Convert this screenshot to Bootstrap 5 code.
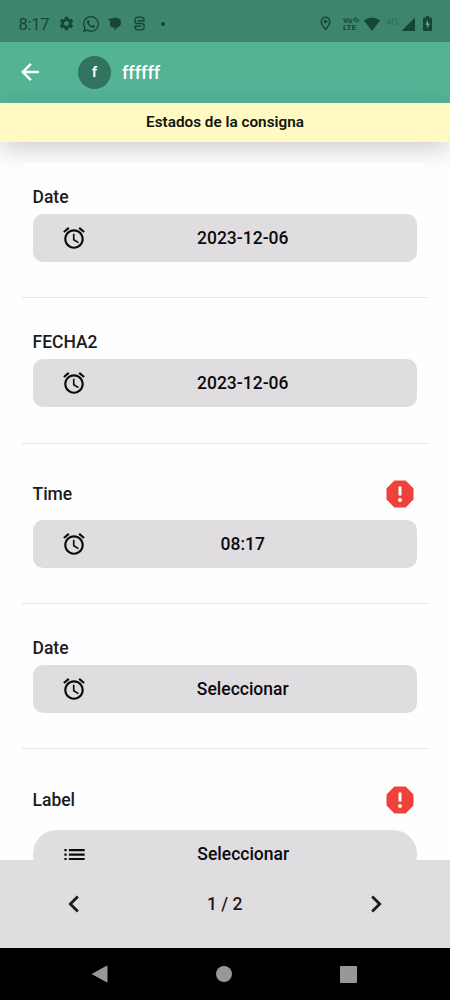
<!DOCTYPE html>
<html lang="es">
<head>
<meta charset="utf-8">
<meta name="viewport" content="width=device-width, initial-scale=1">
<title>Estados de la consigna</title>
<link href="https://cdn.jsdelivr.net/npm/bootstrap@5.3.0/dist/css/bootstrap.min.css" rel="stylesheet">
<style>
  body { font-family: Roboto, "Liberation Sans", sans-serif; color: #1d1b1e; background: #fefefe; font-weight: 500; }
  svg { display: block; flex: none; fill: currentColor; }
  .screen { height: 1000px; }
  .status { height: 42px; background: #3d856c; color: #17453a; padding: 5px 18px 0 18.5px; }
  .clock { font-size: 16.5px; font-weight: 400; width: 30px; letter-spacing: -.3px; margin: 3px 9px 0 0; }
  .volte { font-size: 8px; line-height: 7px; font-weight: 700; width: 17px; margin-right: 4px; }
  .volte span { display: block; white-space: nowrap; }
  .net { font-size: 9.5px; line-height: 10px; font-weight: 400; color: #2c715d; width: 13px; margin: 0 2px 4px 0; }
  .appbar { height: 60.5px; background: #54b295; padding-left: 17px; }
  .avatar { width: 33px; height: 33px; background: #30735f; font-size: 15.5px; margin-left: 35px; margin-right: 11px; }
  .user-name { font-size: 18px; }
  .banner { height: 39.5px; background: #fefac2; color: #15130c; font-size: 15.3px; font-weight: 600; padding-top: 1px; box-shadow: 0 9px 24px -2px rgba(50,40,60,.24); z-index: 0; }
  .fields { padding: 21px 22.5px 0 21.5px; }
  .sheet { background: #fefefe; z-index: 1; border-radius: 8px 8px 0 0; }
  .field { padding: 18px 11px 35px; height: 145.5px; border-bottom: 1px solid #e6e4e6; }
  .field.first { height: 135px; padding-top: 8px; }
  .field.required { height: 160px; padding-top: 25px; }
  .field.required .field-label { height: 51px; margin-top: 0; }
  .field.last .pick { margin-top: 5px; }
  .field-label { height: 34px; padding-top: 1px; font-size: 17.5px; margin-top: 9px; }
  .alert-icon { margin: -1px -1px 0 0; color: #ee4139; }
  .pick { height: 48px; border-radius: 10px; background: #e0dde1; color: #0c0a0d; font-size: 17.5px; font-weight: 500; padding: 0 29px 0 28.5px; border: 0; }
  .pick span { flex: 1; text-align: center; margin: 1px -11px 0 0; }
  .pick.rounder { border-radius: 24px; }
  .pager { height: 88px; background: #e0dde1; font-size: 17.5px; padding: 0 57px 0 56.5px; z-index: 2; }
  .sysnav { height: 52px; background: #000; color: #9a979b; z-index: 2; padding: 0 93px 0 91px; }
</style>
</head>
<body>
<svg class="d-none">
  <symbol id="alarm" viewBox="0 0 24 24"><path d="M22 5.720l-4.600-3.860-1.290 1.530 4.600 3.860L22 5.720zM7.880 3.390L6.600 1.860 2 5.710l1.290 1.530 4.590-3.850zM12.500 8H11v6l4.750 2.850.75-1.230-4-2.370V8zM12 4c-4.970 0-9 4.030-9 9s4.020 9 9 9c4.970 0 9-4.030 9-9s-4.030-9-9-9zm0 16c-3.870 0-7-3.130-7-7s3.130-7 7-7 7 3.130 7 7-3.130 7-7 7z"/></symbol>
  <symbol id="report" viewBox="0 0 24 24"><path d="M15.730 3H8.270L3 8.270v7.460L8.270 21h7.460L21 15.730V8.270L15.730 3zM12 17.300c-.72 0-1.300-.58-1.300-1.300 0-.72.58-1.300 1.300-1.300.72 0 1.300.58 1.300 1.300 0 .72-.58 1.300-1.300 1.300zm1-4.300h-2V7h2v6z"/></symbol>
</svg>
<div class="screen d-flex flex-column overflow-hidden">
  <header class="status d-flex align-items-center flex-shrink-0">
    <span class="clock">8:17</span>
    <svg width="17" height="17" viewBox="0 0 24 24"><path d="M19.14 12.94c.04-.3.06-.61.06-.94 0-.32-.02-.64-.07-.94l2.03-1.58c.18-.14.23-.41.12-.61l-1.92-3.32c-.12-.22-.37-.29-.59-.22l-2.39.96c-.5-.38-1.03-.7-1.62-.94l-.36-2.54c-.04-.24-.24-.41-.48-.41h-3.84c-.24 0-.43.17-.47.41l-.36 2.54c-.59.24-1.13.57-1.62.94l-2.39-.96c-.22-.08-.47 0-.59.22L2.74 8.87c-.12.21-.08.47.12.61l2.03 1.58c-.05.3-.09.63-.09.94s.02.64.07.94l-2.03 1.58c-.18.14-.23.41-.12.61l1.92 3.32c.12.22.37.29.59.22l2.39-.96c.5.38 1.03.7 1.62.94l.36 2.54c.05.24.24.41.48.41h3.84c.24 0 .44-.17.47-.41l.36-2.54c.59-.24 1.13-.56 1.62-.94l2.39.96c.22.08.47 0 .59-.22l1.92-3.32c.12-.22.07-.47-.12-.61l-2.01-1.58zM12 15.6c-1.98 0-3.6-1.62-3.6-3.6s1.62-3.6 3.6-3.6 3.6 1.62 3.6 3.6-1.62 3.6-3.6 3.6z"/></svg>
    <svg style="margin-left:8px" width="16" height="16" viewBox="0 0 16 16"><path d="M13.601 2.326A7.854 7.854 0 0 0 7.994 0C3.627 0 .068 3.558.064 7.926c0 1.399.366 2.76 1.057 3.965L0 16l4.204-1.102a7.933 7.933 0 0 0 3.79.965h.004c4.368 0 7.926-3.558 7.93-7.93A7.898 7.898 0 0 0 13.6 2.326zM7.994 14.521a6.573 6.573 0 0 1-3.356-.92l-.24-.144-2.494.654.666-2.433-.156-.251a6.56 6.56 0 0 1-1.007-3.505c0-3.626 2.957-6.584 6.591-6.584a6.56 6.56 0 0 1 4.66 1.931 6.557 6.557 0 0 1 1.928 4.66c-.004 3.639-2.961 6.592-6.592 6.592zm3.615-4.934c-.197-.099-1.17-.578-1.353-.646-.182-.065-.315-.099-.445.099-.133.197-.513.646-.627.775-.114.133-.232.148-.43.05-.197-.1-.836-.308-1.592-.985-.59-.525-.985-1.175-1.103-1.372-.114-.198-.011-.304.088-.403.087-.088.197-.232.296-.346.1-.114.133-.198.198-.33.065-.134.034-.248-.015-.347-.05-.099-.445-1.076-.612-1.47-.16-.389-.323-.335-.445-.34-.114-.007-.247-.007-.38-.007a.729.729 0 0 0-.529.247c-.182.198-.691.677-.691 1.654 0 .977.71 1.916.81 2.049.098.133 1.394 2.132 3.383 2.992.47.205.84.326 1.129.418.475.152.904.129 1.246.08.38-.058 1.171-.48 1.338-.943.164-.464.164-.86.114-.943-.049-.084-.182-.133-.38-.232z"/></svg>
    <svg style="margin-left:9px" width="14" height="14" viewBox="0 0 14 14"><path d="M.3 1.500h3.200C5 .8 6 .7 8 .7a5 4.900 0 0 1 1.700 9.500L6.500 13.600V10.500H5.500a3.500 3.500 0 0 1-3.500-3.500V4.500z"/></svg>
    <svg style="margin-left:12px" width="11" height="15" viewBox="0 0 12 16"><g fill="none" stroke="currentColor" stroke-width="1.500"><path d="M11 5.500V4.500Q11 1 7.500 1h-3Q1 1 1 4.500v1Q1 8 3.500 8h5Q11 8 11 10.500v1Q11 15 7.500 15h-3Q1 15 1 11.500v-1"/><path d="M4 5h7M1 11h7"/></g></svg>
    <svg style="margin-left:16px" width="4" height="4" viewBox="0 0 4 4"><circle cx="2" cy="2" r="2"/></svg>
    <svg class="ms-auto" style="margin-right:12px" width="11" height="15" viewBox="0 0 11 15"><path d="M5.500 1.300A4.200 4.200 0 0 0 1.300 5.500C1.300 8.500 5.500 13.300 5.500 13.300S9.700 8.500 9.700 5.500A4.200 4.200 0 0 0 5.500 1.300z" fill="none" stroke="currentColor" stroke-width="1.500"/><circle cx="5.500" cy="5.500" r="1.700"/></svg>
    <div class="volte"><span class="d-flex">Vo<svg width="6" height="6" viewBox="0 0 6 6"><path d="M0 2.500A3 3 0 0 1 3 5.500M1 .7A4.500 4.500 0 0 1 5.300 5" fill="none" stroke="currentColor" stroke-width="1.100"/></svg></span><span>LTE</span></div>
    <svg style="margin-right:6px" width="16" height="14" viewBox="0 0 16 14"><path d="M0 3.500Q8-2.500 16 3.500L8 14z"/></svg>
    <span class="net">4G</span>
    <svg style="margin-right:8px" width="14" height="14" viewBox="0 0 14 14"><path d="M14 .5V14H.5z"/></svg>
    <svg width="9" height="15" viewBox="0 0 9 15"><path d="M3 0h3v1.500h2q1 0 1 1V14q0 1-1 1H1q-1 0-1-1V2.500q0-1 1-1h2z"/><path d="M5 4L2.200 8.700h1.900V12.700L6.900 7.600H5z" fill="#6fa08f"/></svg>
  </header>
  <nav class="appbar d-flex align-items-center flex-shrink-0 text-white">
    <svg width="26" height="26" viewBox="0 0 24 24"><path d="M20 11H7.830l5.590-5.590L12 4l-8 8 8 8 1.410-1.410L7.830 13H20v-2z" stroke="currentColor" stroke-width=".4"/></svg>
    <div class="avatar rounded-circle d-flex align-items-center justify-content-center">f</div>
    <span class="user-name">ffffff</span>
  </nav>
  <div class="banner d-flex align-items-center justify-content-center flex-shrink-0 position-relative">Estados de la consigna</div>
  <main class="fields flex-grow-1 overflow-hidden" style="min-height:0">
    <div class="sheet position-relative">
      <section class="field first">
        <div class="field-label d-flex align-items-center">Date</div>
        <button class="pick w-100 d-flex align-items-center"><svg width="26" height="26"><use href="#alarm"/></svg><span>2023-12-06</span></button>
      </section>
      <section class="field">
        <div class="field-label d-flex align-items-center">FECHA2</div>
        <button class="pick w-100 d-flex align-items-center"><svg width="26" height="26"><use href="#alarm"/></svg><span>2023-12-06</span></button>
      </section>
      <section class="field required">
        <div class="field-label d-flex align-items-center justify-content-between">Time<svg class="alert-icon" width="36" height="36"><use href="#report"/></svg></div>
        <button class="pick w-100 d-flex align-items-center"><svg width="26" height="26"><use href="#alarm"/></svg><span>08:17</span></button>
      </section>
      <section class="field">
        <div class="field-label d-flex align-items-center">Date</div>
        <button class="pick w-100 d-flex align-items-center"><svg width="26" height="26"><use href="#alarm"/></svg><span>Seleccionar</span></button>
      </section>
      <section class="field required last">
        <div class="field-label d-flex align-items-center justify-content-between">Label<svg class="alert-icon" width="36" height="36"><use href="#report"/></svg></div>
        <button class="pick rounder w-100 d-flex align-items-center"><svg width="27" height="27" viewBox="0 0 24 24"><path d="M3 13h2v-2H3v2zm0 4h2v-2H3v2zm0-8h2V7H3v2zm4 4h14v-2H7v2zm0 4h14v-2H7v2zM7 7v2h14V7H7z"/></svg><span>Seleccionar</span></button>
      </section>
    </div>
  </main>
  <footer class="pager d-flex align-items-center justify-content-between flex-shrink-0">
    <svg width="34" height="34" viewBox="0 0 24 24"><path d="M15.410 7.410L14 6l-6 6 6 6 1.410-1.410L10.830 12z"/></svg>
    <span>1 / 2</span>
    <svg width="34" height="34" viewBox="0 0 24 24"><path d="M10 6L8.590 7.410 13.170 12l-4.580 4.590L10 18l6-6z"/></svg>
  </footer>
  <div class="sysnav d-flex align-items-center justify-content-between flex-shrink-0">
    <svg width="17" height="18" viewBox="0 0 17 18"><path d="M16 1v16L1.500 9z" stroke="currentColor" stroke-linejoin="round"/></svg>
    <svg width="16" height="16" viewBox="0 0 16 16"><circle cx="8" cy="8" r="8"/></svg>
    <svg width="17" height="17" viewBox="0 0 17 17"><rect width="17" height="17" rx="1"/></svg>
  </div>
</div>
<script src="https://cdn.jsdelivr.net/npm/bootstrap@5.3.0/dist/js/bootstrap.bundle.min.js"></script>
</body>
</html>
